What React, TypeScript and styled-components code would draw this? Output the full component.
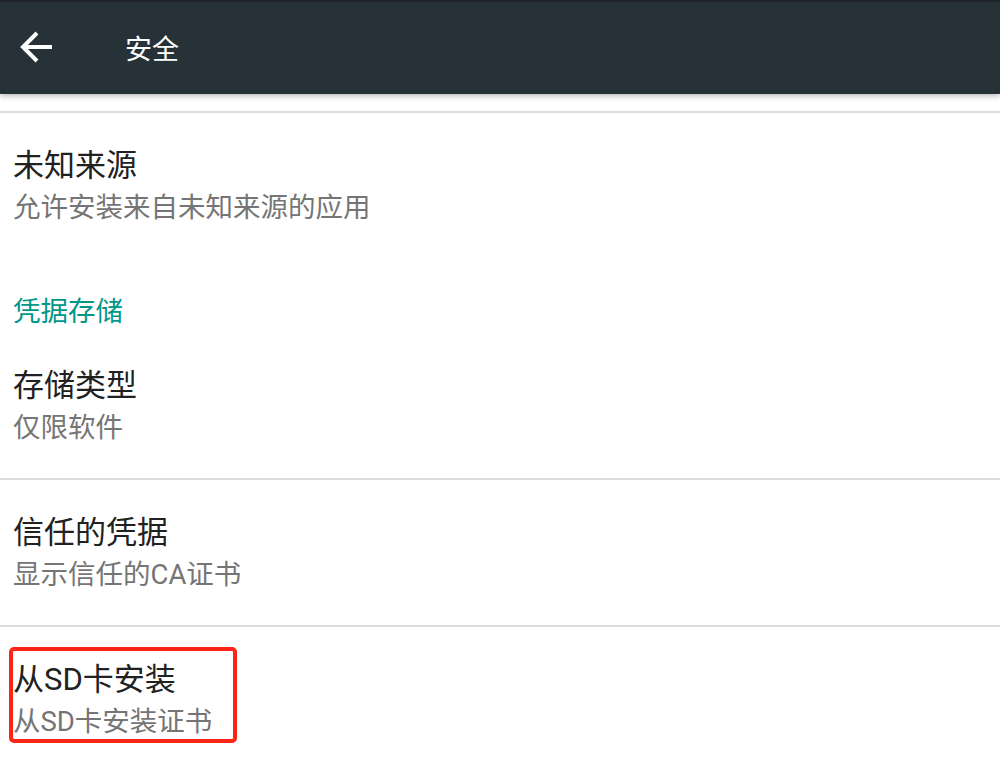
import React from "react";
import styled, { createGlobalStyle } from "styled-components";

const Global = createGlobalStyle`
  html, body { margin: 0; padding: 0; background: #ffffff; }
  body { font-family: Roboto, "Noto Sans CJK SC", sans-serif; }
  *, *::before, *::after { box-sizing: border-box; }
`;

const Page = styled.div`
  width: 1000px;
  height: 764px;
  overflow: hidden;
  background: #ffffff;
  display: flex;
  flex-direction: column;
`;

const AppBar = styled.header`
  position: relative;
  z-index: 2;
  height: 94px;
  flex: none;
  background: #263238;
  border-top: 2px solid #1f2428;
  display: flex;
  align-items: center;
  padding: 0 0 0 20px;
  box-shadow: 0 2px 6px rgba(0, 0, 0, 0.28);
`;

const BackButton = styled.div`
  width: 34px;
  height: 34px;
  display: flex;
  align-items: center;
  justify-content: center;
  margin-right: 71px;
  margin-top: -2px;
`;

const Title = styled.h1`
  margin: 0;
  font-size: 27px;
  font-weight: 400;
  color: #ffffff;
  margin-top: -2px;
`;

const List = styled.div`
  display: flex;
  flex-direction: column;
  padding-top: 17px;
`;

const Divider = styled.div`
  height: 2px;
  background: #dddddd;
  flex: none;
`;

const Item = styled.div`
  padding: 32px 13px 29px;
`;

const TextBlock = styled.div<{ $highlight?: boolean }>`
  position: relative;
  display: inline-block;
  &::after {
    content: "";
    display: ${(p) => (p.$highlight ? "block" : "none")};
    position: absolute;
    left: -4px;
    top: -12px;
    width: 228px;
    height: 96px;
    border: 4px solid #ff2418;
    border-radius: 5px;
  }
`;

const ItemTitle = styled.div`
  font-size: 31px;
  line-height: 42px;
  color: #212121;
  white-space: nowrap;
`;

const ItemSub = styled.div`
  font-size: 27.5px;
  line-height: 42px;
  color: #757575;
  white-space: nowrap;
`;

const SectionHeader = styled.div`
  padding: 33px 13px 0;
  font-size: 27.5px;
  line-height: 42px;
  color: #009688;
`;

const BackArrow = () => (
  <svg width="34" height="34" viewBox="0 0 34 34" fill="none">
    <path
      d="M32 17H4M17 3L3 17L17 31"
      stroke="#ffffff"
      strokeWidth="4"
      strokeLinecap="butt"
      strokeLinejoin="miter"
    />
  </svg>
);

type Pref = { title: string; sub: string; highlight?: boolean };

const Preference = ({ title, sub, highlight }: Pref) => (
  <Item>
    <TextBlock $highlight={highlight}>
      <ItemTitle>{title}</ItemTitle>
      <ItemSub>{sub}</ItemSub>
    </TextBlock>
  </Item>
);

export default function App() {
  return (
    <>
      <Global />
      <Page>
        <AppBar>
          <BackButton>
            <BackArrow />
          </BackButton>
          <Title>安全</Title>
        </AppBar>
        <List>
          <Divider />
          <Preference title="未知来源" sub="允许安装来自未知来源的应用" />
          <SectionHeader>凭据存储</SectionHeader>
          <Preference title="存储类型" sub="仅限软件" />
          <Divider />
          <Preference title="信任的凭据" sub="显示信任的CA证书" />
          <Divider />
          <Preference title="从SD卡安装" sub="从SD卡安装证书" highlight />
        </List>
      </Page>
    </>
  );
}
